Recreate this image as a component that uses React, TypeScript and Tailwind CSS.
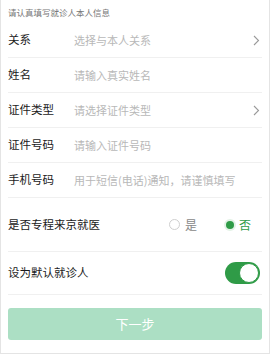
const font = { fontFamily: '"Noto Sans CJK SC", "Noto Sans", sans-serif' };

const Chevron = () => (
  <svg width="7" height="11" viewBox="0 0 7 11" fill="none" className="mr-[2px]">
    <path d="M1 1l4.5 4.5L1 10" stroke="#9a9a9a" strokeWidth="1.1" />
  </svg>
);

const rows = [
  { label: "关系", placeholder: "选择与本人关系", arrow: true },
  { label: "姓名", placeholder: "请输入真实姓名", arrow: false },
  { label: "证件类型", placeholder: "请选择证件类型", arrow: true },
  { label: "证件号码", placeholder: "请输入证件号码", arrow: false },
  { label: "手机号码", placeholder: "用于短信(电话)通知，请谨慎填写", arrow: false },
];

export default function App() {
  return (
    <div
      className="w-[270px] h-[354px] bg-white border-x border-b border-[#e4e4e4] overflow-hidden"
      style={font}
    >
      <div className="px-[7px]">
        <div className="h-[23px] pt-[6px] text-[8.5px] leading-[13px] text-[#777]">
          请认真填写就诊人本人信息
        </div>
        {rows.map((r) => (
          <div
            key={r.label}
            className="flex items-center h-[35px] border-b border-[#f0f0f0]"
          >
            <div className="w-[66px] text-[11.5px] text-[#1a1a1a]">{r.label}</div>
            <div className="flex-1 text-[11px] text-[#b8b8b8] whitespace-nowrap">
              {r.placeholder}
            </div>
            {r.arrow && <Chevron />}
          </div>
        ))}
        <div className="flex items-center h-[54px] border-b border-[#f0f0f0]">
          <div className="flex-1 text-[11.5px] text-[#1a1a1a]">是否专程来京就医</div>
          <div className="flex items-center gap-[5px] mr-[29px]">
            <span className="w-[11px] h-[11px] rounded-full border border-[#cfcfcf]" />
            <span className="text-[12px] text-[#888]">是</span>
          </div>
          <div className="flex items-center gap-[5px] mr-[11px]">
            <span className="w-[8px] h-[8px] rounded-full bg-[#2f9b47] ring-[2px] ring-[#e3f2e6]" />
            <span className="text-[12px] text-[#2f9b47]">否</span>
          </div>
        </div>
        <div className="flex items-center h-[43px] border-b border-[#f0f0f0]">
          <div className="flex-1 text-[11.5px] text-[#1a1a1a]">设为默认就诊人</div>
          <div className="w-[35px] h-[22px] rounded-full bg-[#2f9b47] flex items-center justify-end pr-[1px] mr-[2px]">
            <span className="w-[20px] h-[20px] rounded-full bg-white border border-[#2f9b47]" />
          </div>
        </div>
        <button className="mt-[13px] w-[254px] h-[32px] rounded-[3px] bg-[#acdfc4] text-white text-[13px]">
          下一步
        </button>
      </div>
    </div>
  );
}
